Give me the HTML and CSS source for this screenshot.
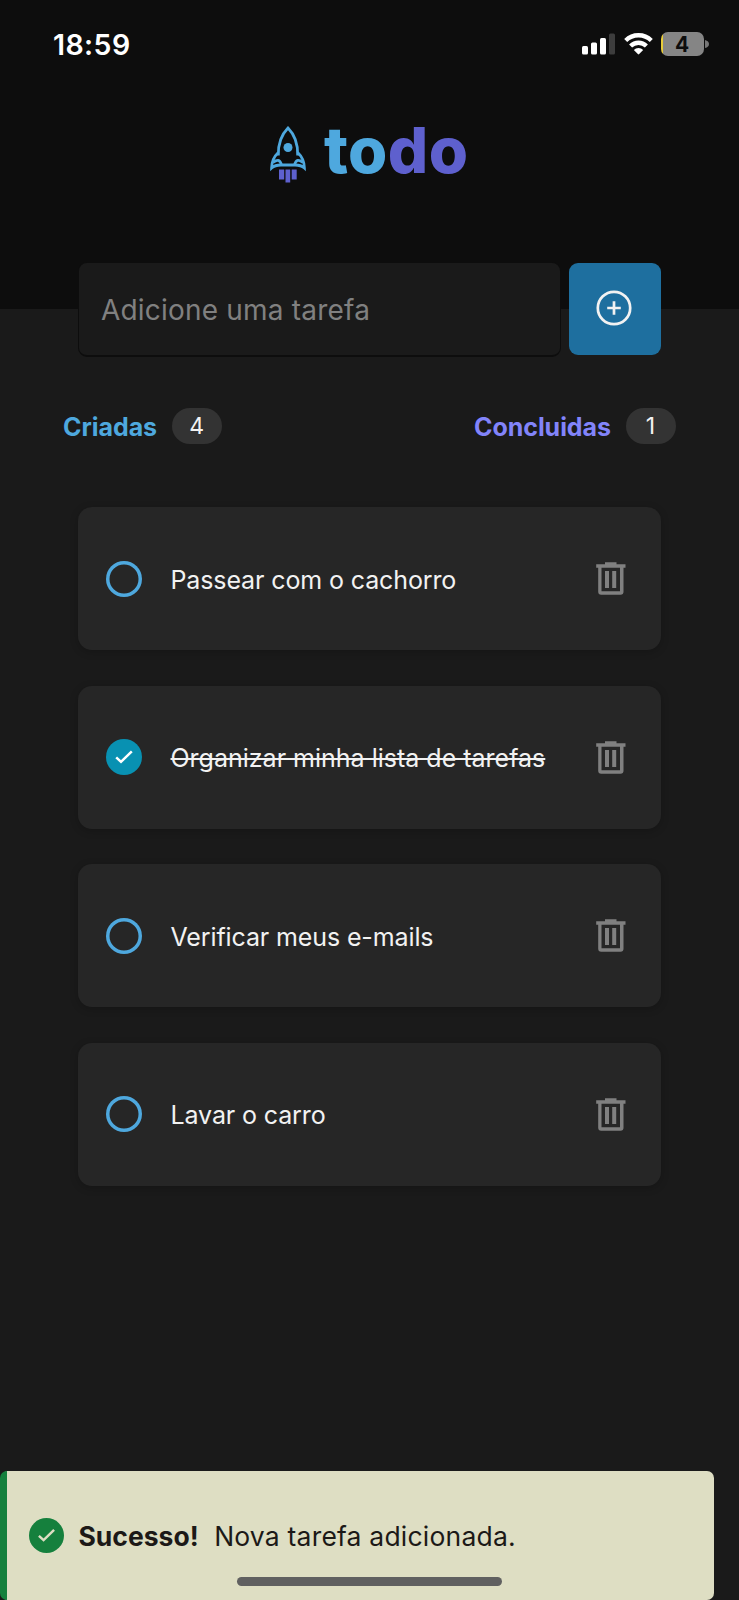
FILE: index.html
```html
<!DOCTYPE html>
<html lang="pt-BR">
<head>
<meta charset="utf-8">
<title>todo</title>
<link rel="stylesheet" href="styles.css">
</head>
<body>
<svg class="defs" width="0" height="0">
  <symbol id="trash" viewBox="0 0 30 34">
    <path fill="currentColor" fill-rule="evenodd" d="M.2 2.300h8.800V.3h11.500v2h9v3.500h-2v24q0 3-3 3H5.200q-3 0-3-3v-24h-2zM5.500 5.800v23.500h18.500V5.800zM9 9h4v17h-4zM16.200 9h4v17h-4z"/>
  </symbol>
  <symbol id="check" viewBox="0 0 36 36">
    <circle cx="18" cy="18" r="18" fill="currentColor"/>
    <path d="M10.200 18.300l4.800 4.500 10.800-10.500" fill="none" stroke="var(--tick)" stroke-width="2.500"/>
  </symbol>
</svg>
<div class="screen">
  <header class="header">
    <div class="status">
      <span class="time">18:59</span>
      <div class="indicators">
        <svg width="33" height="22" viewBox="0 0 33 22"><g fill="#fff"><rect x="0" y="13" width="6" height="8.500" rx="1.500"/><rect x="9" y="9.500" width="6" height="12" rx="1.500"/><rect x="18" y="5" width="6" height="16.500" rx="1.500"/><rect x="27" y=".5" width="6" height="21" rx="1.500" fill="#3d3d3d"/></g></svg>
        <svg class="wifi" width="29" height="22" viewBox="0 0 29 22"><g fill="none" stroke="#fff" stroke-width="4.300"><path d="M1.700 7.500a18.200 18.200 0 0 1 25.600 0"/><path d="M6.600 13a11.200 11.200 0 0 1 15.800 0"/></g><path d="M9.800 17a6.600 6.600 0 0 1 9.400 0l-4 4.100q-.7.600-1.400 0z" fill="#fff"/></svg>
        <div class="battery"><span class="level">4</span></div>
        <svg class="cap" width="4" height="8" viewBox="0 0 4 8"><path d="M0 0q4 1 4 4t-4 4z" fill="#777"/></svg>
      </div>
    </div>
    <div class="logo">
      <svg width="37" height="59" viewBox="0 0 37 59">
        <g fill="none" stroke="#4ea8de" stroke-width="2.800">
          <path d="M8.300 29.500C8 17 12 8 18 2c6 6 10 15 9.700 27.500"/>
          <path d="M8.300 26.500C3.500 31 1.700 35 1.600 42c3-2.800 6-3 9.400-3h14c3.400 0 6.400.2 9.400 3-.1-7-1.900-11-6.700-15.500"/>
          <path d="M3 36.500c4-3 7-3.500 8.500 2.500M33 36.500c-4-3-7-3.500-8.500 2.500"/>
        </g>
        <circle cx="18" cy="21.500" r="4.500" fill="#4ea8de"/>
        <path d="M9 43.500h5.200v10H9zM15.500 43.500h4.700v13h-4.700zM21.700 43.500h5v10h-5z" fill="#5e60ce"/>
      </svg>
      <span class="word"><span class="to">to</span><span class="do">do</span></span>
    </div>
  </header>
  <main class="main">
    <form class="form">
      <div class="field">Adicione uma tarefa</div>
      <div class="add"><svg width="36" height="36" viewBox="0 0 36 36"><g fill="none" stroke="#f2f2f2" stroke-width="2.700"><circle cx="18" cy="18" r="16.200"/><path d="M18 11.200v13.600M11.200 18h13.600"/></g></svg></div>
    </form>
    <div class="counts">
      <div class="count created"><b>Criadas</b><span class="pill">4</span></div>
      <div class="count done"><b>Concluidas</b><span class="pill">1</span></div>
    </div>
    <div class="list">
      <div class="task"><span class="ring"></span><span class="label">Passear com o cachorro</span><svg class="trash"><use href="#trash"/></svg></div>
      <div class="task checked"><svg class="tick"><use href="#check"/></svg><span class="label">Organizar minha lista de tarefas</span><svg class="trash"><use href="#trash"/></svg></div>
      <div class="task"><span class="ring"></span><span class="label">Verificar meus e-mails</span><svg class="trash"><use href="#trash"/></svg></div>
      <div class="task"><span class="ring"></span><span class="label">Lavar o carro</span><svg class="trash"><use href="#trash"/></svg></div>
    </div>
  </main>
  <div class="toast">
    <svg class="tick"><use href="#check"/></svg><b>Sucesso!</b><span class="message">Nova tarefa adicionada.</span>
  </div>
  <div class="home"></div>
</div>
</body>
</html>
```

FILE: styles.css
```css
* { box-sizing: border-box; }
body { margin: 0; background: #1a1a1a; font-family: Inter, "Liberation Sans", sans-serif; }
svg { display: block; flex: none; }
.defs { position: absolute; }
.screen { position: relative; width: 739px; height: 1600px; overflow: hidden; background: #1a1a1a; display: flex; flex-direction: column; }
.header { height: 309px; flex: none; background: #0d0d0d; }
.status { display: flex; justify-content: space-between; height: 88px; padding: 0 30px 0 53px; align-items: center; }
.time { color: #fff; font-size: 28.500px; font-weight: 600; line-height: 34px; letter-spacing: .4px; padding-top: 2px; }
.indicators { display: flex; align-items: center; }
.wifi { margin: 0 8px 0 9px; }
.battery { width: 43px; height: 24px; border-radius: 7px; background: linear-gradient(90deg, #e8cc3a 2px, #858585 2px); display: flex; align-items: center; justify-content: center; padding-right: 1px; }
.level { font-size: 21px; font-weight: 700; line-height: 24px; padding-top: 1px; color: #0d0d0d; }
.cap { margin-left: 1px; }
.logo { display: flex; width: 199px; height: 60px; margin: 38px auto 0; gap: 17px; }
.word { flex: none; font-size: 63.500px; font-weight: 850; line-height: 47px; letter-spacing: .4px; white-space: nowrap; }
.to { color: #4ea8de; }
.do { color: #5e60ce; }
.main { margin-top: -47px; }
.form { display: flex; gap: 8px; width: 583px; height: 94px; margin: 0 auto; }
.field { width: 483px; height: 95px; border: 1px solid #0d0d0d; border-bottom-width: 2px; border-radius: 9px; background: #1a1a1a; color: #808080; font-size: 28px; line-height: 94px; padding-left: 22px; letter-spacing: .2px; white-space: nowrap; }
.add { width: 92px; height: 92px; margin-top: 1px; border-radius: 9px; background: #1e6f9f; display: grid; place-items: center; padding: 0 3px 2px 0; }
.counts { display: flex; justify-content: space-between; margin-top: 52px; padding: 0 63px; }
.count { display: flex; align-items: center; gap: 15px; height: 36px; font-size: 25px; letter-spacing: -.05px; }
.count b { padding-top: 1px; }
.pill { width: 50px; height: 36px; border-radius: 18px; background: #333; color: #f2f2f2; font-size: 23px; line-height: 37px; text-align: center; padding-right: 1px; }
.created { color: #4ea8de; }
.done { color: #8284fa; }
.list { display: flex; flex-direction: column; gap: 35.600px; width: 583px; margin: 63px auto 0; }
.task { display: flex; align-items: center; height: 143px; padding: 0 35px 0 28px; border-radius: 14px; background: #262626; box-shadow: 0 2px 8px rgba(0, 0, 0, .2); color: #f2f2f2; font-size: 25px; }
.ring { width: 36px; height: 36px; flex: none; box-shadow: inset 0 0 0 3.500px #4ea8de; border-radius: 50%; }
.tick { width: 36px; height: 36px; color: #0891b2; --tick: #fff; }
.label { flex: 1; margin-left: 28.500px; padding-top: 2px; white-space: nowrap; letter-spacing: -.12px; }
.checked .label { text-decoration: line-through; text-decoration-thickness: 2px; letter-spacing: 0; }
.trash { width: 30px; height: 34px; margin-top: 1px; color: #808080; }
.toast { display: flex; align-items: center; width: 714px; height: 129px; margin-top: auto; padding: 0 0 0 22px; border-left: 7px solid #15803d; border-radius: 7px; background: #dedec3; color: #1c1917; font-size: 26.500px; white-space: nowrap; }
.toast .tick { color: #15803d; --tick: #dedec3; margin: 0 14.500px 0 0; width: 35px; height: 35px; }
.message { margin-left: 15.500px; letter-spacing: .2px; }
.home { position: absolute; left: 237px; top: 1577px; width: 265px; height: 9px; border-radius: 5px; background: #606060; }
```
